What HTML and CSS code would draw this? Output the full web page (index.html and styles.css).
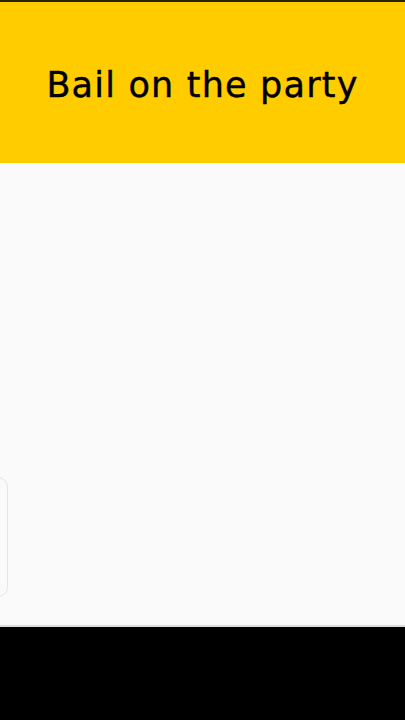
FILE: index.html
```html
<!DOCTYPE html>
<html lang="en">
<head>
    <meta charset="UTF-8">
    <meta name="viewport" content="width=device-width, initial-scale=1.0">
    <title>Bail on the party</title>
    <link rel="stylesheet" href="styles.css">
</head>
<body>
    <div class="screen">
        <div class="header">
            <h1>Bail on the party</h1>
        </div>
        <div class="content">
            <div class="side-tab"></div>
        </div>
        <div class="navbar"></div>
    </div>
</body>
</html>
```

FILE: styles.css
```css
body {
    margin: 0;
    font-family: "DejaVu Sans", Arial, sans-serif;
    background-color: #000;
}
.screen {
    display: flex;
    flex-direction: column;
    height: 720px;
    overflow: hidden;
}
.header {
    height: 161px;
    border-top: 2px solid #2a2200;
    background-color: #ffcc00;
    display: flex;
    align-items: center;
    justify-content: center;
}
.header h1 {
    margin: 4px 0 0 0;
    font-size: 35px;
    font-weight: normal;
    letter-spacing: 1.2px;
    color: #000;
    -webkit-text-stroke: 0.4px #000;
}
.content {
    height: 462px;
    background-color: #fafafa;
    border-bottom: 2px solid #dcdcdc;
    display: flex;
    align-items: flex-start;
}
.side-tab {
    margin-top: 314px;
    margin-left: -20px;
    width: 26px;
    height: 118px;
    border: 1px solid #e6e6e6;
    border-radius: 10px;
    background-color: #fafafa;
}
.navbar {
    flex: 1;
    background-color: #000;
}
```
